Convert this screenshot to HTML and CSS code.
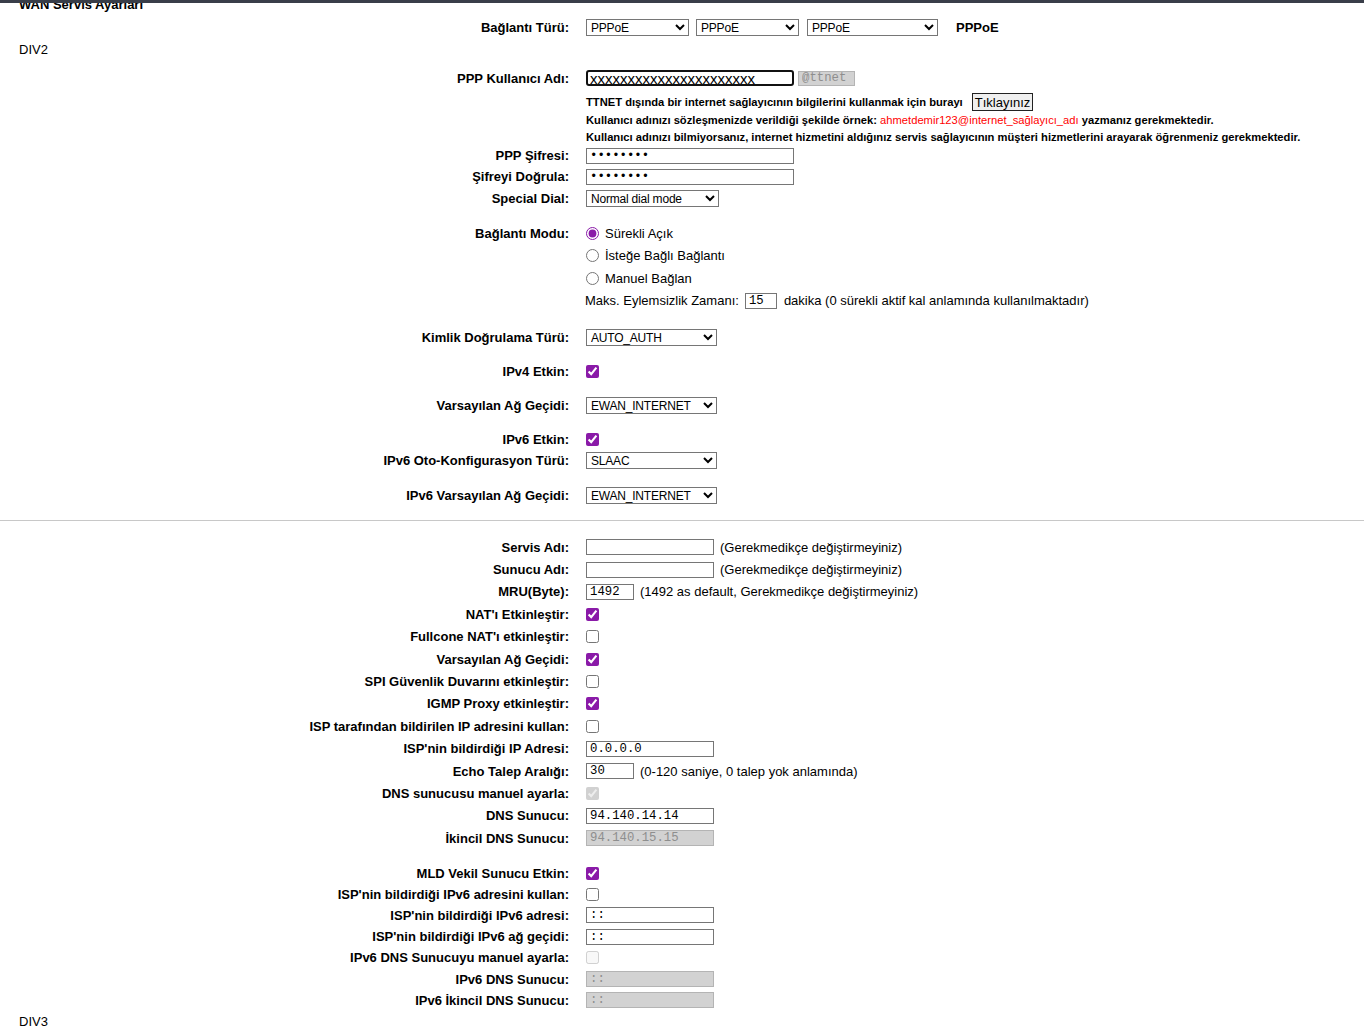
FILE: index.html
```html
<!DOCTYPE html>
<html lang="tr">

<head>
    <meta charset="UTF-8">
    <meta name="viewport" content="width=device-width, initial-scale=1.0">
    <title>WAN Servis Ayarları</title>
    <link rel="stylesheet" href="styles.css">
</head>

<body>
    <div class="topbar"></div>
    <div class="title-strip">
        <h2>WAN Servis Ayarları</h2>
    </div>

    <!-- baglanti turu -->
    <div class="row">
        <label>Bağlantı Türü:</label>
        <div class="cell">
            <select class="sel-conn1"><option>PPPoE</option></select>
            <select class="sel-conn2"><option>PPPoE</option></select>
            <select class="sel-conn3"><option>PPPoE</option></select>
            <b class="conn-name">PPPoE</b>
        </div>
    </div>
    <div class="divname div2">DIV2</div>

    <div class="space-6"></div>
    <div class="row">
        <label for="ppp-user">PPP Kullanıcı Adı:</label>
        <div class="cell">
            <input type="text" id="ppp-user" class="user-field" value="xxxxxxxxxxxxxxxxxxxxxx">
            <input type="text" class="field suffix" value="@ttnet" disabled>
        </div>
    </div>
    <div class="space-4"></div>
    <div class="row row-info-first">
        <span></span>
        <div class="cell note">
            TTNET dışında bir internet sağlayıcının bilgilerini kullanmak için burayı
            <button type="button" class="btn-link">Tıklayınız</button>
        </div>
    </div>
    <div class="row row-info">
        <span></span>
        <div class="cell note">
            Kullanıcı adınızı sözleşmenizde verildiği şekilde örnek:&nbsp;<span class="red">ahmetdemir123@internet_sağlayıcı_adı</span>&nbsp;yazmanız gerekmektedir.
        </div>
    </div>
    <div class="row row-info">
        <span></span>
        <div class="cell note">
            Kullanıcı adınızı bilmiyorsanız, internet hizmetini aldığınız servis sağlayıcının müşteri hizmetlerini arayarak öğrenmeniz gerekmektedir.
        </div>
    </div>

    <div class="row row-21">
        <label>PPP Şifresi:</label>
        <div class="cell"><input type="password" class="field wide" value="12345678"></div>
    </div>
    <div class="row row-21">
        <label>Şifreyi Doğrula:</label>
        <div class="cell"><input type="password" class="field wide" value="12345678"></div>
    </div>
    <div class="row">
        <label>Special Dial:</label>
        <div class="cell"><select class="sel-dial"><option>Normal dial mode</option></select></div>
    </div>

    <!-- baglanti modu -->
    <div class="space-13"></div>
    <div class="row row-radio">
        <label>Bağlantı Modu:</label>
        <div class="cell"><input type="radio" name="mode" id="mode-on" checked><span>Sürekli Açık</span></div>
    </div>
    <div class="row row-radio">
        <span></span>
        <div class="cell"><input type="radio" name="mode"><span>İsteğe Bağlı Bağlantı</span></div>
    </div>
    <div class="row row-radio">
        <span></span>
        <div class="cell"><input type="radio" name="mode"><span>Manuel Bağlan</span></div>
    </div>
    <div class="row row-radio">
        <span></span>
        <div class="cell idle">
            <span>Maks. Eylemsizlik Zamanı:</span>
            <input type="text" class="field tiny" value="15">
            <span>dakika (0 sürekli aktif kal anlamında kullanılmaktadır)</span>
        </div>
    </div>

    <div class="space-14"></div>
    <div class="row">
        <label>Kimlik Doğrulama Türü:</label>
        <div class="cell"><select class="sel-std"><option>AUTO_AUTH</option></select></div>
    </div>
    <div class="space-12"></div>
    <div class="row">
        <label>IPv4 Etkin:</label>
        <div class="cell"><input type="checkbox" checked></div>
    </div>
    <div class="space-12"></div>
    <div class="row">
        <label>Varsayılan Ağ Geçidi:</label>
        <div class="cell"><select class="sel-std"><option>EWAN_INTERNET</option></select></div>
    </div>
    <div class="space-12"></div>
    <div class="row">
        <label>IPv6 Etkin:</label>
        <div class="cell"><input type="checkbox" checked></div>
    </div>
    <div class="row row-21">
        <label>IPv6 Oto-Konfigurasyon Türü:</label>
        <div class="cell"><select class="sel-std"><option>SLAAC</option></select></div>
    </div>
    <div class="space-13"></div>
    <div class="row">
        <label>IPv6 Varsayılan Ağ Geçidi:</label>
        <div class="cell"><select class="sel-std"><option>EWAN_INTERNET</option></select></div>
    </div>

    <div class="space-14"></div>
    <hr class="divider">
    <div class="space-15"></div>

    <!-- pppoe ayrintilari -->
    <div class="rows-ppp">
        <div class="row">
            <label>Servis Adı:</label>
            <div class="cell"><input type="text" class="field mid"><span class="hint">(Gerekmedikçe değiştirmeyiniz)</span></div>
        </div>
        <div class="row">
            <label>Sunucu Adı:</label>
            <div class="cell"><input type="text" class="field mid"><span class="hint">(Gerekmedikçe değiştirmeyiniz)</span></div>
        </div>
        <div class="row">
            <label>MRU(Byte):</label>
            <div class="cell"><input type="text" class="field short" value="1492"><span class="hint">(1492 as default, Gerekmedikçe değiştirmeyiniz)</span></div>
        </div>
        <div class="row">
            <label>NAT'ı Etkinleştir:</label>
            <div class="cell"><input type="checkbox" checked></div>
        </div>
        <div class="row">
            <label>Fullcone NAT'ı etkinleştir:</label>
            <div class="cell"><input type="checkbox"></div>
        </div>
        <div class="row">
            <label>Varsayılan Ağ Geçidi:</label>
            <div class="cell"><input type="checkbox" checked></div>
        </div>
        <div class="row">
            <label>SPI Güvenlik Duvarını etkinleştir:</label>
            <div class="cell"><input type="checkbox"></div>
        </div>
        <div class="row">
            <label>IGMP Proxy etkinleştir:</label>
            <div class="cell"><input type="checkbox" checked></div>
        </div>
        <div class="row">
            <label>ISP tarafından bildirilen IP adresini kullan:</label>
            <div class="cell"><input type="checkbox"></div>
        </div>
        <div class="row">
            <label>ISP'nin bildirdiği IP Adresi:</label>
            <div class="cell"><input type="text" class="field mid" value="0.0.0.0"></div>
        </div>
        <div class="row">
            <label>Echo Talep Aralığı:</label>
            <div class="cell"><input type="text" class="field short" value="30"><span class="hint">(0-120 saniye, 0 talep yok anlamında)</span></div>
        </div>
        <div class="row">
            <label>DNS sunucusu manuel ayarla:</label>
            <div class="cell"><input type="checkbox" checked disabled></div>
        </div>
        <div class="row">
            <label>DNS Sunucu:</label>
            <div class="cell"><input type="text" class="field mid" value="94.140.14.14"></div>
        </div>
        <div class="row">
            <label>İkincil DNS Sunucu:</label>
            <div class="cell"><input type="text" class="field mid" value="94.140.15.15" disabled></div>
        </div>
    </div>

    <div class="space-13"></div>

    <!-- ipv6 ayrintilari -->
    <div class="rows-v6">
        <div class="row">
            <label>MLD Vekil Sunucu Etkin:</label>
            <div class="cell"><input type="checkbox" checked></div>
        </div>
        <div class="row">
            <label>ISP'nin bildirdiği IPv6 adresini kullan:</label>
            <div class="cell"><input type="checkbox"></div>
        </div>
        <div class="row">
            <label>ISP'nin bildirdiği IPv6 adresi:</label>
            <div class="cell"><input type="text" class="field mid" value="::"></div>
        </div>
        <div class="row">
            <label>ISP'nin bildirdiği IPv6 ağ geçidi:</label>
            <div class="cell"><input type="text" class="field mid" value="::"></div>
        </div>
        <div class="row">
            <label>IPv6 DNS Sunucuyu manuel ayarla:</label>
            <div class="cell"><input type="checkbox" disabled></div>
        </div>
        <div class="row">
            <label>IPv6 DNS Sunucu:</label>
            <div class="cell"><input type="text" class="field mid" value="::" disabled></div>
        </div>
        <div class="row">
            <label>IPv6 İkincil DNS Sunucu:</label>
            <div class="cell"><input type="text" class="field mid" value="::" disabled></div>
        </div>
    </div>
    <div class="divname">DIV3</div>
</body>

</html>
```

FILE: styles.css
```css
body {
    margin: 0;
    font-family: "Liberation Sans", Arial, sans-serif;
    font-size: 13px;
    color: #000;
    background-color: #fff;
}

.topbar {
    height: 3px;
    background-color: #393e49;
}

/* page scrolled, only the lower half of the heading shows */
.title-strip {
    height: 13px;
    overflow: hidden;
}

.title-strip h2 {
    margin: -6px 0 0 19px;
    font-size: 13px;
    line-height: 15px;
}

.divname {
    height: 22px;
    line-height: 22px;
    padding-left: 19px;
}

.div2 {
    margin-top: 1px;
}

.row {
    display: grid;
    grid-template-columns: 569px 1fr;
    column-gap: 17px;
    align-items: center;
    height: 22px;
}

.row > label {
    text-align: right;
    font-weight: bold;
    white-space: nowrap;
}

.row-21 {
    height: 21px;
}

.row-radio {
    height: 22.5px;
}

.row-info-first {
    height: 18px;
}

.row-info {
    height: 17px;
}

.rows-ppp .row {
    height: 22.4px;
}

.rows-v6 .row {
    height: 21.2px;
}

.cell {
    display: flex;
    align-items: center;
    white-space: nowrap;
}

.space-4 { height: 4px; }
.space-6 { height: 6px; }
.space-12 { height: 12px; }
.space-13 { height: 13px; }
.space-14 { height: 14px; }
.space-15 { height: 15px; }

.divider {
    margin: 0;
    border: none;
    border-top: 1px solid #c8c8c8;
}

/* form controls */
select {
    box-sizing: border-box;
    height: 17px;
    padding: 0;
    border: 1px solid #767676;
    border-radius: 0;
    font: 12px "Liberation Sans", Arial, sans-serif;
    letter-spacing: -0.2px;
    line-height: 15px;
    color: #000;
    background-color: #fff;
}

.sel-conn1 { width: 103px; margin-right: 7px; }
.sel-conn2 { width: 103px; margin-right: 8px; }
.sel-conn3 { width: 131px; margin-right: 18px; }
.sel-dial { width: 133px; }
.sel-std { width: 131px; }

.conn-name {
    font-size: 13px;
}

.field {
    box-sizing: border-box;
    height: 16px;
    padding: 0 3px;
    border: 1px solid #767676;
    border-radius: 0;
    font: 12.3px "Liberation Mono", "Courier New", monospace;
    color: #000;
    background-color: #fff;
}

.field:disabled {
    background-color: #d2d2d2;
    border-color: #b4b4b4;
    color: #8e8e8e;
}

.wide { width: 208px; }
.mid { width: 128px; }
.short { width: 48px; }
.tiny { width: 32px; margin: 0 7px 0 6px; }

.user-field {
    box-sizing: border-box;
    width: 208px;
    height: 16px;
    padding: 0 2px;
    border: 2px solid #111;
    border-radius: 3px;
    font: 15px "Liberation Sans", Arial, sans-serif;
    outline: none;
}

.suffix {
    width: 57px;
    margin-left: 4px;
    height: 15px;
}

input[type="checkbox"],
input[type="radio"] {
    width: 13px;
    height: 13px;
    margin: 0;
    accent-color: #8a1aa8;
}

input[type="radio"] {
    margin-right: 6px;
}

.idle {
    margin-left: -1px;
}

.hint {
    margin-left: 6px;
}

.note {
    font-size: 11.2px;
    font-weight: bold;
}

.red {
    color: #f00;
    font-weight: normal;
}

.btn-link {
    height: 18px;
    margin-left: 9px;
    padding: 0 2px;
    border: 1px solid #222;
    border-radius: 0;
    background-color: #efefef;
    font: 13px "Liberation Sans", Arial, sans-serif;
    color: #000;
}
```
